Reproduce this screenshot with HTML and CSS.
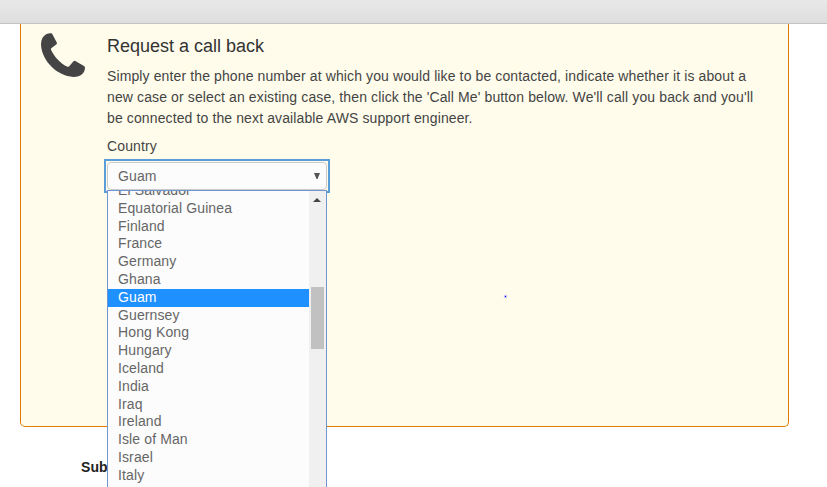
FILE: index.html
```html
<!DOCTYPE html>
<html lang="en">
<head>
<meta charset="utf-8">
<title>Request a call back</title>
<link rel="stylesheet" href="styles.css">
</head>
<body>
<header class="toolbar"></header>
<main>
  <section class="card">
    <svg class="phone" viewBox="0 0 44 44" aria-hidden="true"><path d="M5.500 1.100C7.500 .2 9.500 0 11 .4L15.900 9.800Q16.100 10.600 15.500 11.300L10.300 15.300Q9.700 16 10.100 17C13.500 24 19 30 26 33.600Q27.200 34.100 28 33.400L32.500 28.300Q33.200 27.600 34.300 28L43 33.100Q44.100 33.800 44 35.100C43.500 40.800 39.500 44 32.500 43.900C16 43 1 28 0 12C-.1 6.500 2 3 5.500 1.100Z"/></svg>
    <div class="content">
      <h2>Request a call back</h2>
      <p>Simply enter the phone number at which you would like to be contacted, indicate whether it is about a<br>new case or select an existing case, then click the 'Call Me' button below. We'll call you back and you'll<br>be connected to the next available AWS support engineer.</p>
      <div class="label">Country</div>
      <div class="select">
        <span>Guam</span>
        <svg class="arrow" viewBox="0 0 6 6"><path d="M0 0H6L3.500 6H2.500Z"/></svg>
        <div class="dropdown">
          <ul>
            <li>El Salvador</li>
            <li>Equatorial Guinea</li>
            <li>Finland</li>
            <li>France</li>
            <li>Germany</li>
            <li>Ghana</li>
            <li class="selected">Guam</li>
            <li>Guernsey</li>
            <li>Hong Kong</li>
            <li>Hungary</li>
            <li>Iceland</li>
            <li>India</li>
            <li>Iraq</li>
            <li>Ireland</li>
            <li>Isle of Man</li>
            <li>Israel</li>
            <li>Italy</li>
          </ul>
          <div class="scrollbar">
            <svg class="up" viewBox="0 0 8 4"><path d="M0 4L4 0L8 4Z"/></svg>
            <div class="thumb"></div>
          </div>
        </div>
      </div>
    </div>
    <i class="dot"></i>
  </section>
  <div class="subject">Subject</div>
</main>
</body>
</html>
```
FILE: styles.css
```css
* { box-sizing: border-box; }
body {
  margin: 0;
  height: 487px;
  overflow: hidden;
  background: #fff;
  color: #444;
  font: 14px/21px "Liberation Sans", Arial, sans-serif;
  letter-spacing: .117px;
}
.toolbar {
  height: 24px;
  background: linear-gradient(#e8e8e8, #dedede);
  border-bottom: 1px solid #c3c3c3;
}
.card {
  position: relative;
  display: flex;
  align-items: flex-start;
  width: 769px;
  height: 403px;
  margin-left: 20px;
  padding: 9px 20px 0;
  background: #fffceb;
  border: 1px solid #e07b00;
  border-top: 0;
  border-radius: 0 0 5px 5px;
}
.phone {
  flex: none;
  width: 44px;
  height: 44px;
  margin-right: 22px;
  fill: #444;
}
.content { white-space: nowrap; }
h2 {
  margin: 0 0 7px;
  font-size: 18px;
  font-weight: 400;
  line-height: 26px;
  letter-spacing: 0;
  color: #333;
}
p { margin: 0; }
.label { margin-top: 7px; }
.select {
  position: relative;
  display: flex;
  align-items: center;
  justify-content: space-between;
  width: 220px;
  height: 28px;
  margin-top: 5px;
  padding: 0 6px 0 10px;
  background: #fcfcfc;
  border: 1px solid #ccc;
  border-radius: 4px;
  color: #666;
}
/* square focus ring around the rounded control */
.select::before {
  content: "";
  position: absolute;
  inset: -4px;
  border: 2px solid #5b9dd9;
}
.arrow { width: 6px; height: 6px; fill: #555; }
.dropdown {
  position: absolute;
  z-index: 1;
  top: 27px;
  left: -1px;
  display: flex;
  width: 220px;
  height: 310px;
  overflow: hidden;
  background: #fcfcfc;
  border: 1px solid #7195d0;
}
ul {
  flex: 1;
  margin: -9px 0 0;
  padding: 0;
  list-style: none;
}
li {
  height: 17.8px;
  padding-left: 10px;
  line-height: 17.8px;
}
.selected { background: #1e90ff; color: #fff; }
.scrollbar {
  width: 17px;
  padding: 7px 2px 0;
  background: #f0f0f0;
}
.up { display: block; width: 8px; height: 4px; margin-left: 2px; fill: #444; }
.thumb { height: 62px; margin-top: 85px; background: #c1c1c1; }
.dot {
  position: absolute;
  left: 484px;
  top: 272px;
  width: 1px;
  height: 1px;
  background: #00f;
  box-shadow: 0 0 1px 1px rgba(70, 70, 255, .35);
}
.subject {
  margin: 30px 0 0 81px;
  color: #222;
  font-weight: 700;
}
```
